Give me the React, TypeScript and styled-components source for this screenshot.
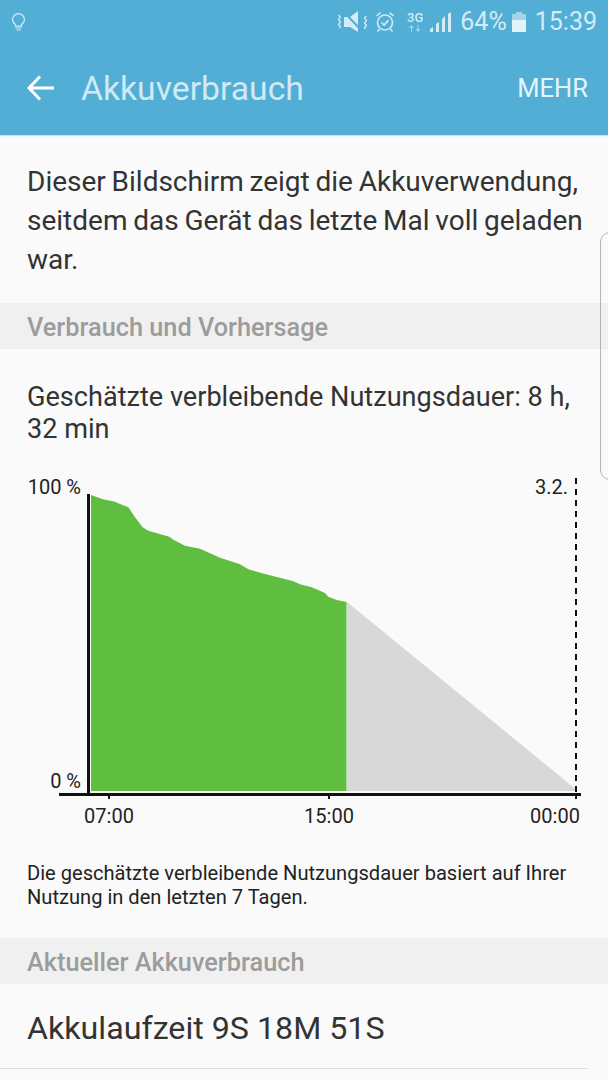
import React from "react";
import styled, { createGlobalStyle } from "styled-components";

const GlobalStyle = createGlobalStyle`
  html, body {
    margin: 0;
    padding: 0;
    background: #fafafa;
  }
  body {
    font-family: Roboto, "Liberation Sans", sans-serif;
    overflow: hidden;
  }
`;

const Screen = styled.div`
  position: relative;
  width: 608px;
  height: 1080px;
  overflow: hidden;
  background: #fafafa;
`;

const Header = styled.header`
  height: 135px;
  background: #52aed4;
  box-shadow: 0 1px 1px rgba(0, 0, 0, 0.12);
  display: flex;
  flex-direction: column;
`;

const StatusBar = styled.div`
  height: 44px;
  padding: 0 11px 0 11px;
  display: flex;
  align-items: center;
  color: #d3ecf6;
  box-sizing: border-box;
`;

const StatusRight = styled.div`
  margin-left: auto;
  display: flex;
  align-items: center;
`;

const StatusText = styled.span<{ $gap: number }>`
  font-size: 25px;
  line-height: 28px;
  margin-left: ${(p) => p.$gap}px;
`;

const StatusIcon = styled.svg<{ $gap?: number }>`
  display: block;
  margin-left: ${(p) => p.$gap || 0}px;
`;

const Toolbar = styled.div`
  flex: 1;
  display: flex;
  align-items: center;
  padding: 0 20px 3px 27px;
`;

const Title = styled.h1`
  margin: 0 0 0 27px;
  font-size: 33.7px;
  font-weight: 400;
  color: #cfeaf5;
`;

const MoreButton = styled.span`
  margin-left: auto;
  font-size: 25.5px;
  color: #e6f5fb;
`;

const Intro = styled.p`
  margin: 0;
  padding: 27px 0 24px 27px;
  font-size: 28px;
  line-height: 39px;
  word-spacing: -1.2px;
  white-space: nowrap;
  color: #333;
`;

const SectionBand = styled.div`
  height: 46px;
  box-sizing: border-box;
  padding: 2px 0 0 27px;
  display: flex;
  align-items: center;
  background: #f0f0f0;
  font-size: 25.3px;
  font-weight: 500;
  color: #9c9c9c;
`;

const Estimate = styled.p`
  margin: 0;
  padding: 32px 0 0 27px;
  font-size: 27.1px;
  line-height: 32px;
  white-space: nowrap;
  color: #333;
`;

const ChartSvg = styled.svg`
  display: block;
  margin-top: 25px;
`;

const ChartLabel = styled.text`
  font-size: 20px;
  fill: #222;
`;

const Footnote = styled.p`
  margin: 0;
  padding: 31px 0 0 27px;
  height: 108px;
  box-sizing: border-box;
  font-size: 20.1px;
  line-height: 24px;
  white-space: nowrap;
  color: #222;
`;

const RuntimeRow = styled.div`
  height: 85px;
  box-sizing: border-box;
  margin-right: 20px;
  padding: 3px 0 0 27px;
  display: flex;
  align-items: center;
  border-bottom: 1px solid #dedede;
  font-size: 32.2px;
  color: #333;
`;

const EdgeHandle = styled.div`
  position: absolute;
  top: 232px;
  right: -12px;
  width: 18px;
  height: 246px;
  border: 1px solid #b4b4b4;
  border-radius: 12px;
`;

const curve =
  "91,25 102,29 115,31.7 120,34 128.3,37.3 135,47.3 142.7,57.3 148.3,60.7 169.3,66.7 173.3,69.7 185,75.7 200,78.7 206.7,81.7 220,87.7 240,94.3 248.3,99.3 270,105.3 293.3,111.3 300,114.3 311.7,117.3 325,123 328.3,126.7 336.7,130 346.5,132";

const BatteryChart = () => (
  <ChartSvg width={608} height={360} viewBox="0 0 608 360">
    {/* svg origin sits at y=470 of the screen */}
    <polygon points="347,132 578,321 347,321" fill="#d8d8d8" />
    <polygon points={`${curve} 346.5,321 91,321`} fill="#5fbd3f" />
    <rect x={87} y={24} width={3} height={301} fill="#111" />
    <rect x={59} y={323} width={522} height={3} fill="#111" />
    <rect x={108} y={326} width={2} height={3} fill="#111" />
    <rect x={328} y={326} width={2} height={3} fill="#111" />
    <rect x={575} y={326} width={2} height={3} fill="#111" />
    <line x1={576} y1={8} x2={576} y2={323} stroke="#111" strokeWidth={2} strokeDasharray="6 5" />
    <ChartLabel x={81} y={24} textAnchor="end">100 %</ChartLabel>
    <ChartLabel x={81} y={318} textAnchor="end">0 %</ChartLabel>
    <ChartLabel x={568} y={24} textAnchor="end">3.2.</ChartLabel>
    <ChartLabel x={109} y={353} textAnchor="middle">07:00</ChartLabel>
    <ChartLabel x={329} y={353} textAnchor="middle">15:00</ChartLabel>
    <ChartLabel x={555} y={353} textAnchor="middle">00:00</ChartLabel>
  </ChartSvg>
);

const App = () => (
  <Screen>
    <GlobalStyle />
    <Header>
      <StatusBar>
        <StatusIcon width={15} height={18} viewBox="0 0 15 18" fill="none" stroke="currentColor" strokeWidth={1.2}>
          <path d="M4.5 11.5C2.8 10.3 1.5 8.8 1.5 6.7a6 6 0 0 1 12 0c0 2.1-1.3 3.6-3 4.8v1.7h-6z" />
          <path d="M4.5 15h6M5.5 17h4" />
        </StatusIcon>
        <StatusRight>
          <StatusIcon width={32} height={22} viewBox="0 0 32 22" fill="none" stroke="currentColor" strokeWidth={1.3}>
            <path d="M1.5 4l2 2-2 2.5 2 2.5-2 2.5 2 2-1 1.5M29.5 5l-2 2 2 2.5-2 2.5 2 2.5-2 2 1 1.5" />
            <path d="M7 6h6l8-6v21l-8-5H7z" fill="currentColor" stroke="none" />
            <path d="M6 0l20 21" stroke="#52aed4" strokeWidth={2} />
          </StatusIcon>
          <StatusIcon $gap={6} width={20} height={22} viewBox="0 0 20 22" fill="none" stroke="currentColor" strokeWidth={1.6}>
            <circle cx={10} cy={11.5} r={7.5} />
            <path d="M6.5 11.5l2.6 2.6 4.4-5M1.5 5l4-3.5M18.5 5l-4-3.5M4.5 18l-2 2.5M15.5 18l2 2.5" />
          </StatusIcon>
          <StatusIcon $gap={12} width={16} height={22} viewBox="0 0 16 22">
            <text x={0} y={11} fontSize={13} fontWeight={500} fill="currentColor" fontFamily="Roboto, sans-serif">3G</text>
            <path d="M4 21v-4H2l2.5-3L7 17H5v4zM11.5 14v4h2L11 21l-2.5-3h2v-4z" fill="#a5d4e8" />
          </StatusIcon>
          <StatusIcon $gap={7} width={21} height={20} viewBox="0 0 21 20" fill="currentColor">
            <polygon points="0,17 3,15 3,20 0,20" />
            <polygon points="6,12 9,10 9,20 6,20" />
            <polygon points="12,7 15,4 15,20 12,20" />
            <polygon points="18,2 21,0 21,20 18,20" />
          </StatusIcon>
          <StatusText $gap={9}>64%</StatusText>
          <StatusIcon $gap={5} width={14} height={20} viewBox="0 0 14 20">
            <rect x={4} y={0} width={6} height={2} fill="#a5d4e8" />
            <rect x={0} y={2} width={14} height={6} fill="#a5d4e8" />
            <rect x={0} y={8} width={14} height={12} fill="#e2f3fa" />
          </StatusIcon>
          <StatusText $gap={9}>15:39</StatusText>
        </StatusRight>
      </StatusBar>
      <Toolbar>
        <StatusIcon width={27} height={26} viewBox="0 0 27 26" fill="none" stroke="#fff" strokeWidth={3}>
          <path d="M27 13H2M13 1.5L2 13l11 11.5" />
        </StatusIcon>
        <Title>Akkuverbrauch</Title>
        <MoreButton>MEHR</MoreButton>
      </Toolbar>
    </Header>
    <Intro>
      Dieser Bildschirm zeigt die Akkuverwendung,
      <br />
      seitdem das Gerät das letzte Mal voll geladen
      <br />
      war.
    </Intro>
    <SectionBand>Verbrauch und Vorhersage</SectionBand>
    <Estimate>
      Geschätzte verbleibende Nutzungsdauer: 8 h,
      <br />
      32 min
    </Estimate>
    <BatteryChart />
    <Footnote>
      Die geschätzte verbleibende Nutzungsdauer basiert auf Ihrer
      <br />
      Nutzung in den letzten 7 Tagen.
    </Footnote>
    <SectionBand>Aktueller Akkuverbrauch</SectionBand>
    <RuntimeRow>Akkulaufzeit 9S 18M 51S</RuntimeRow>
    <EdgeHandle />
  </Screen>
);

export default App;
